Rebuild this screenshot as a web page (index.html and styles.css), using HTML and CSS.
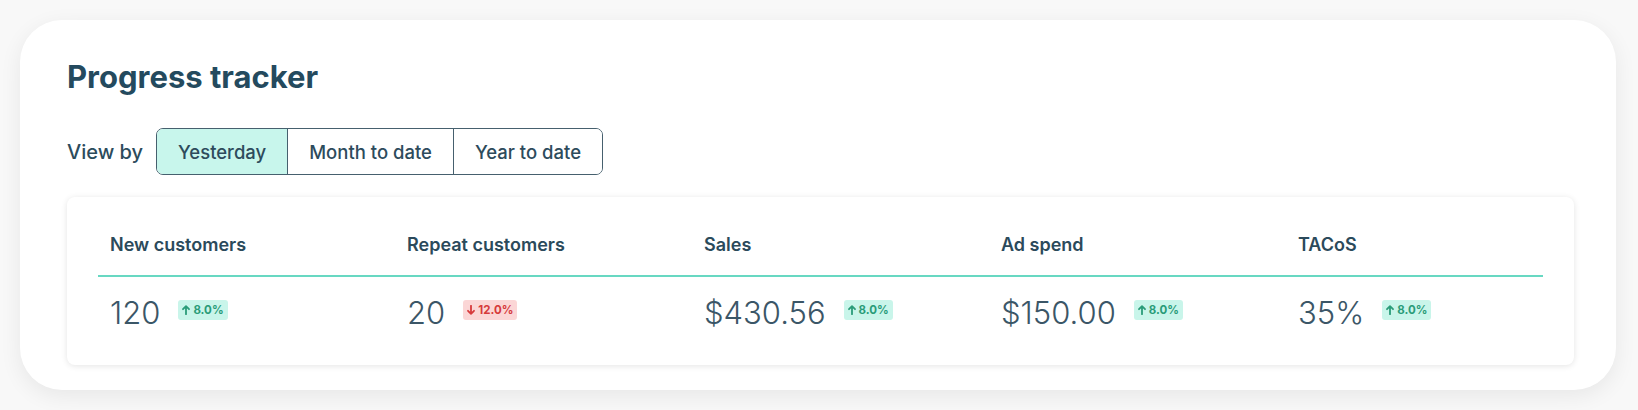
FILE: index.html
```html
<!DOCTYPE html>
<html lang="en">
<head>
<meta charset="utf-8">
<title>Progress tracker</title>
<link rel="stylesheet" href="styles.css">
</head>
<body>
<section class="tracker">
  <h1 class="tracker-title">Progress tracker</h1>
  <div class="view-by">
    <span class="view-by-label">View by</span>
    <div class="segmented">
      <button class="seg seg-active" type="button">Yesterday</button>
      <button class="seg" type="button">Month to date</button>
      <button class="seg" type="button">Year to date</button>
    </div>
  </div>
  <div class="metrics">
    <div class="metrics-row metrics-head">
      <div class="cell">New customers</div>
      <div class="cell">Repeat customers</div>
      <div class="cell">Sales</div>
      <div class="cell">Ad spend</div>
      <div class="cell">TACoS</div>
    </div>
    <div class="metrics-row metrics-values">
      <div class="cell value-cell"><span class="value">120</span><span class="badge badge-up"><svg class="arrow" viewBox="0 0 8 10"><path d="M4 9.2V1.2M1 4.2L4 1.2L7 4.2"/></svg>8.0%</span></div>
      <div class="cell value-cell"><span class="value">20</span><span class="badge badge-down"><svg class="arrow" viewBox="0 0 8 10"><path d="M4 0.8V8.8M1 5.8L4 8.8L7 5.8"/></svg>12.0%</span></div>
      <div class="cell value-cell"><span class="value">$430.56</span><span class="badge badge-up"><svg class="arrow" viewBox="0 0 8 10"><path d="M4 9.2V1.2M1 4.2L4 1.2L7 4.2"/></svg>8.0%</span></div>
      <div class="cell value-cell"><span class="value">$150.00</span><span class="badge badge-up"><svg class="arrow" viewBox="0 0 8 10"><path d="M4 9.2V1.2M1 4.2L4 1.2L7 4.2"/></svg>8.0%</span></div>
      <div class="cell value-cell"><span class="value">35%</span><span class="badge badge-up"><svg class="arrow" viewBox="0 0 8 10"><path d="M4 9.2V1.2M1 4.2L4 1.2L7 4.2"/></svg>8.0%</span></div>
    </div>
  </div>
</section>
</body>
</html>
```

FILE: styles.css
```css
html, body {
  margin: 0;
  padding: 0;
}
body {
  background: #f8f8f8;
  font-family: Inter, "Noto Sans", "Liberation Sans", sans-serif;
  color: #284a5d;
  padding: 20px 22px 20px 20px;
}
.tracker {
  background: #ffffff;
  border-radius: 42px;
  box-shadow: 0 6px 22px rgba(0, 0, 0, 0.07);
  padding: 39px 42px 26px 47px;
  height: 370px;
  box-sizing: border-box;
}
.tracker-title {
  margin: 0;
  font-size: 31px;
  line-height: 36px;
  font-weight: 700;
  color: #244a5e;
}
.view-by {
  display: flex;
  align-items: center;
  gap: 13px;
  margin-top: 33px;
}
.view-by-label {
  font-size: 20px;
  font-weight: 500;
  color: #2c4b5c;
}
.segmented {
  display: flex;
  border: 1.5px solid #46606e;
  border-radius: 7px;
  overflow: hidden;
  height: 47px;
  box-sizing: border-box;
}
.seg {
  font-family: inherit;
  font-size: 18.5px;
  font-weight: 500;
  color: #2d4b5c;
  background: #ffffff;
  border: 0;
  border-left: 1.5px solid #46606e;
  padding: 0 21px;
  margin: 0;
}
.seg:first-child {
  border-left: 0;
}
.seg-active {
  background: #c8f6ec;
}
.metrics {
  margin-top: 22px;
  background: #ffffff;
  border-radius: 8px;
  box-shadow: 0 1px 6px rgba(0, 0, 0, 0.11);
  padding: 0 31px;
  height: 168px;
  box-sizing: border-box;
}
.metrics-row {
  display: grid;
  grid-template-columns: 297px 297px 297px 297px 1fr;
  padding-left: 12px;
}
.metrics-head {
  padding-top: 36px;
  padding-bottom: 18px;
  border-bottom: 2px solid #68d8c2;
  font-size: 18px;
  line-height: 24px;
  font-weight: 600;
  color: #2b4a5b;
}
.value-cell {
  display: flex;
  align-items: center;
  gap: 18px;
}
.metrics-values {
  padding-top: 17px;
}
.value {
  font-size: 31px;
  line-height: 38px;
  font-weight: 300;
  color: #3b5667;
}
.badge {
  display: inline-flex;
  align-items: center;
  gap: 3px;
  font-size: 11.5px;
  font-weight: 700;
  height: 20px;
  padding: 0 4px;
  border-radius: 3px;
  margin-top: -6px;
}
.badge-up {
  background: #c9f5ea;
  color: #2a9c79;
}
.badge-down {
  background: #fbd6d6;
  color: #d63a3c;
}
.arrow {
  width: 8px;
  height: 10px;
  fill: none;
  stroke: currentColor;
  stroke-width: 1.8;
  stroke-linecap: round;
  stroke-linejoin: round;
}
```
